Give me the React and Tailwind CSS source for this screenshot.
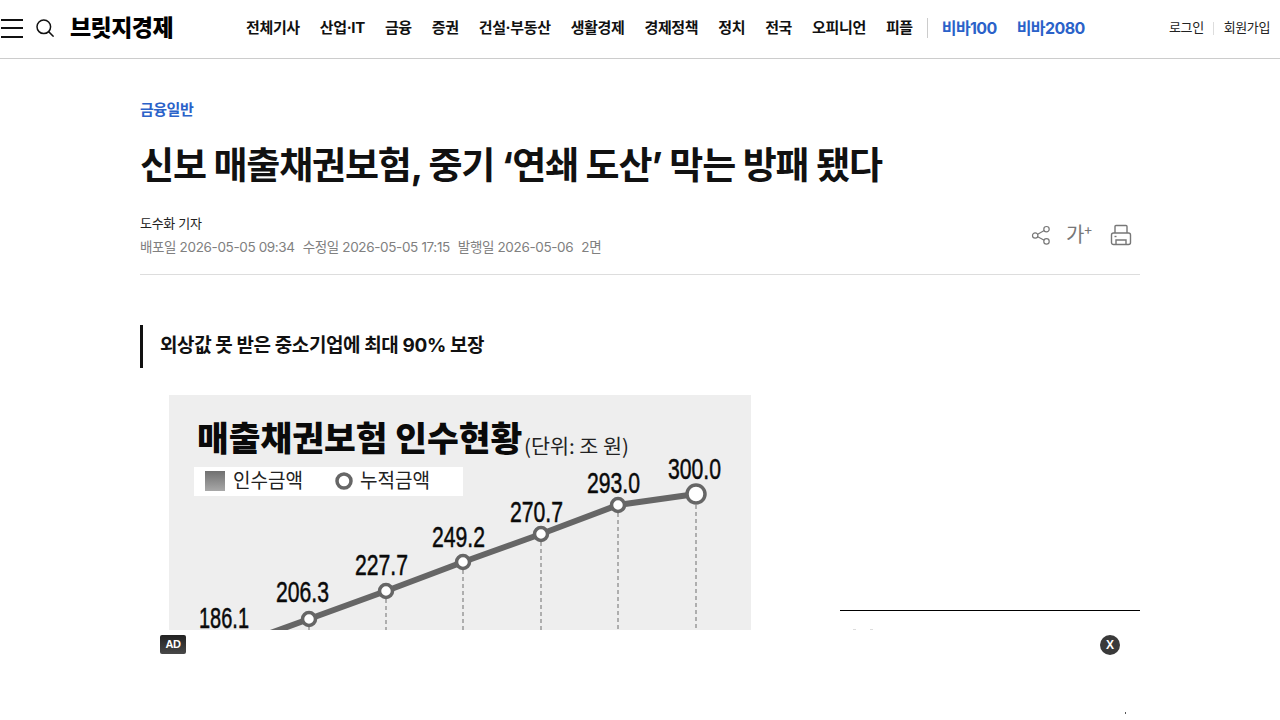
const sans = 'font-["Inter","Noto_Sans_CJK_KR",sans-serif]';

const navItems = ['전체기사', '산업·IT', '금융', '증권', '건설·부동산', '생활경제', '경제정책', '정치', '전국', '오피니언', '피플'];

const points = [
  { x: 140, y: 224, label: '206.3', lx: 107, ly: 207 },
  { x: 217, y: 196, label: '227.7', lx: 186, ly: 180 },
  { x: 294, y: 167, label: '249.2', lx: 263, ly: 152 },
  { x: 372, y: 139, label: '270.7', lx: 341, ly: 127 },
  { x: 449, y: 110, label: '293.0', lx: 418, ly: 98 },
];

const Chart = () => (
  <svg width="582" height="235" viewBox="0 0 582 235" className="block bg-[#eeeeee]">
    <defs>
      <linearGradient id="sq" x1="0" y1="0" x2="0" y2="1">
        <stop offset="0" stopColor="#707070" />
        <stop offset="1" stopColor="#a8a8a8" />
      </linearGradient>
    </defs>
    <text x="28" y="56" fontSize="34.5" fontWeight="900" fill="#0a0a0a" fontFamily="'Noto Sans CJK KR',sans-serif">매출채권보험 인수현황</text>
    <text x="355" y="59" fontSize="20" fill="#222" textLength="105" lengthAdjust="spacingAndGlyphs" fontFamily="'Noto Sans CJK KR',sans-serif">(단위: 조 원)</text>
    <rect x="25" y="72" width="269" height="29" fill="#fff" />
    <rect x="36" y="76" width="20" height="20" fill="url(#sq)" />
    <text x="64" y="93" fontSize="20" fill="#222" textLength="70" lengthAdjust="spacingAndGlyphs" fontFamily="'Noto Sans CJK KR',sans-serif">인수금액</text>
    <circle cx="175" cy="86" r="7" fill="#fff" stroke="#666" strokeWidth="3.5" />
    <text x="191" y="93" fontSize="20" fill="#222" textLength="70" lengthAdjust="spacingAndGlyphs" fontFamily="'Noto Sans CJK KR',sans-serif">누적금액</text>

    {[...points.map((p) => p.x), 527].map((x, i) => (
      <line key={x} x1={x} y1={i === 5 ? 110 : points[i].y + 8} x2={x} y2="235" stroke="#999" strokeWidth="1.5" strokeDasharray="4 3" />
    ))}
    <polyline points="63,252 140,224 217,196 294,167 372,139 449,110 527,99" fill="none" stroke="#666" strokeWidth="6" />
    {points.map((p) => (
      <circle key={p.label} cx={p.x} cy={p.y} r="6.5" fill="#fff" stroke="#666" strokeWidth="3.5" />
    ))}
    <circle cx="527" cy="99" r="9" fill="#fff" stroke="#666" strokeWidth="3.5" />

    <text x="30" y="233" fontSize="29" stroke="#0a0a0a" strokeWidth="0.5" fill="#0a0a0a" textLength="50" lengthAdjust="spacingAndGlyphs" fontFamily="'Liberation Sans',sans-serif">186.1</text>
    {points.map((p) => (
      <text key={p.label} x={p.lx} y={p.ly} fontSize="29" stroke="#0a0a0a" strokeWidth="0.5" fill="#0a0a0a" textLength="53" lengthAdjust="spacingAndGlyphs" fontFamily="'Liberation Sans',sans-serif">{p.label}</text>
    ))}
    <text x="499" y="84" fontSize="29" stroke="#0a0a0a" strokeWidth="0.5" fill="#0a0a0a" textLength="53" lengthAdjust="spacingAndGlyphs" fontFamily="'Liberation Sans',sans-serif">300.0</text>
  </svg>
);

const Header = () => (
  <header className="h-[59px] pb-[2px] border-b border-[#cccccc] flex items-center">
    <button className="ml-[1px] w-[22px] flex flex-col gap-[6.5px]">
      <span className="h-[2px] bg-[#111]" />
      <span className="h-[2px] bg-[#111]" />
      <span className="h-[2px] bg-[#111]" />
    </button>
    <svg className="ml-[13px]" width="18" height="18" viewBox="0 0 18 18" fill="none" stroke="#111" strokeWidth="1.5">
      <circle cx="7.8" cy="7.8" r="6.8" />
      <line x1="12.6" y1="12.6" x2="17.6" y2="17.6" />
    </svg>
    <div className="ml-[16px] w-[105px] text-[23px] leading-none font-black tracking-[-0.55px] text-black whitespace-nowrap">브릿지경제</div>
    <nav className="ml-[71px] flex items-center gap-[20px] text-[15px] font-bold tracking-[-0.35px] text-[#111] whitespace-nowrap">
      {navItems.map((item) => (
        <a key={item}>{item}</a>
      ))}
      <span className="-mx-[6px] w-px h-[20px] bg-[#cccccc]" />
      <a className="text-[16px] tracking-[-0.6px] text-[#2b62c9]">비바100</a>
      <a className="text-[16px] tracking-[-0.6px] text-[#2b62c9]">비바2080</a>
    </nav>
    <div className="ml-auto mr-[10px] flex items-center text-[13px] tracking-[-0.4px] text-[#222] whitespace-nowrap">
      <a>로그인</a>
      <span className="mx-[9.5px] w-px h-[13px] bg-[#dddddd]" />
      <a>회원가입</a>
    </div>
  </header>
);

const ArticleTools = () => (
  <div className="flex items-center text-[#777] mr-[8px]">
    <svg width="20" height="20" viewBox="0 0 20 20" fill="none" stroke="#777" strokeWidth="1.2">
      <circle cx="15.5" cy="4.2" r="2.7" />
      <circle cx="4.2" cy="10.5" r="2.7" />
      <circle cx="15.5" cy="16.4" r="2.7" />
      <line x1="6.7" y1="9.2" x2="13.2" y2="5.6" />
      <line x1="6.7" y1="11.8" x2="13.2" y2="15.2" />
    </svg>
    <div className="ml-[15px] flex items-start w-[26px]">
      <span className="text-[20px] leading-none font-normal">가</span>
      <span className="text-[14px] leading-none -mt-[3px] -ml-[1px]">+</span>
    </div>
    <svg className="ml-[18px]" width="22" height="22" viewBox="0 0 22 22" fill="none" stroke="#777" strokeWidth="1.4">
      <path d="M5 9V2.5a1 1 0 0 1 1-1h10a1 1 0 0 1 1 1V9" />
      <rect x="1.5" y="9" width="19" height="11.5" rx="2" />
      <path d="M6 20.5V16h10v4.5" />
      <line x1="4.5" y1="12.5" x2="6.5" y2="12.5" />
    </svg>
  </div>
);

export default function App() {
  return (
    <div className={`relative h-[720px] overflow-hidden bg-white ${sans}`}>
      <Header />
      <main className="w-[1000px] mx-auto">
        <div className="pt-[41px] text-[15px] leading-[20px] font-semibold tracking-[-0.5px] text-[#2b62c9]">금융일반</div>
        <h1 className="mt-[21px] text-[37px] leading-[50px] font-bold tracking-[-1.15px] text-[#111] whitespace-nowrap">
          신보 매출채권보험, 중기 ‘연쇄 도산’ 막는 방패 됐다
        </h1>
        <div className="mt-[22px] pb-[17px] border-b border-[#dddddd] flex items-end justify-between">
          <div>
            <div className="text-[13px] leading-[20px] tracking-[-0.3px] text-[#222]">도수화 기자</div>
            <div className="mt-[4px] flex gap-[8px] text-[13.5px] leading-[20px] tracking-[-0.36px] text-[#808080]">
              <span>배포일 2026-05-05 09:34</span>
              <span>수정일 2026-05-05 17:15</span>
              <span>발행일 2026-05-06</span>
              <span>2면</span>
            </div>
          </div>
          <div className="pb-[11px]">
            <ArticleTools />
          </div>
        </div>
        <div className="mt-[50px] flex gap-[100px]">
          <article className="w-[600px] shrink-0">
            <h2 className="h-[43px] border-l-[3px] border-[#111] pl-[17px] flex items-center text-[19px] font-bold tracking-[-0.4px] text-[#111]">
              외상값 못 받은 중소기업에 최대 90% 보장
            </h2>
            <div className="mt-[27px] ml-[29px]">
              <Chart />
            </div>
          </article>
          <aside className="w-[300px] mt-[285px] border-t border-black pt-[18px] flex gap-[14px]">
            <span className="ml-[13px] w-[3px] h-px bg-[#dddddd]" />
            <span className="w-[3px] h-px bg-[#dddddd]" />
          </aside>
        </div>
      </main>

      {/* bottom ad strip */}
      <div className="absolute left-0 right-0 bottom-0 h-[90px] bg-white">
        <div className="absolute left-[160px] top-[5px] w-[26px] h-[19px] rounded-[2px] bg-gradient-to-b from-[#222222] to-[#484848] flex items-center justify-center text-[11px] font-black tracking-[-0.5px] text-white" style={{ fontFamily: "'Liberation Sans',sans-serif" }}>AD</div>
        <div className="absolute left-[1100px] top-[5px] w-[20px] h-[20px] rounded-full bg-[#3a3a3a] flex items-center justify-center text-[12px] font-bold text-white" style={{ fontFamily: "'Liberation Sans',sans-serif" }}>X</div>
        <span className="absolute left-[1125px] top-[82px] w-px h-[2px] bg-[#555]" />
      </div>
    </div>
  );
}
